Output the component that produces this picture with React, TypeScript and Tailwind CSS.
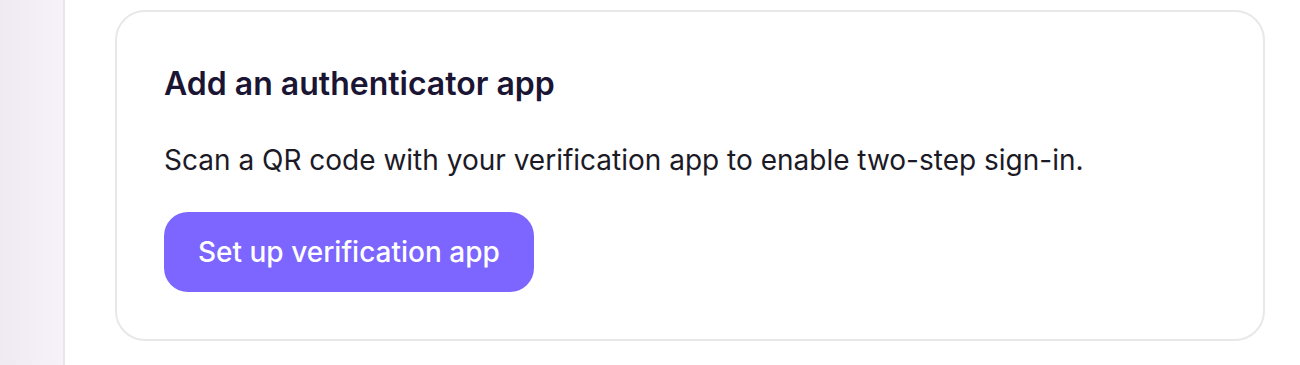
export default function App() {
  return (
    <div
      className="flex h-[365px] w-[1300px] bg-white"
      style={{ fontFamily: "Inter, 'Noto Sans', sans-serif" }}
    >
      <aside className="w-[65px] shrink-0 border-r-2 border-[#e8e6ea] bg-gradient-to-r from-[#efeaf2] to-[#f7f1f9]" />
      <main className="flex-1 pl-[50px] pr-[35px] pt-[10px]">
        <section className="rounded-[30px] border-2 border-[#e8e8e8] pb-[47px] pl-[47px] pr-[48px] pt-[52px]">
          <h2 className="text-[32px] font-semibold leading-[40px] text-[#1b1534]">
            Add an authenticator app
          </h2>
          <p className="mt-[38px] text-[28px] leading-[36px] text-[#1c1a26]">
            Scan a QR code with your verification app to enable two-step sign-in.
          </p>
          <button className="mt-[34px] flex h-[80px] items-center rounded-[24px] bg-[#7c66ff] px-[34px] text-[28px] font-medium text-white">
            Set up verification app
          </button>
        </section>
      </main>
    </div>
  )
}
